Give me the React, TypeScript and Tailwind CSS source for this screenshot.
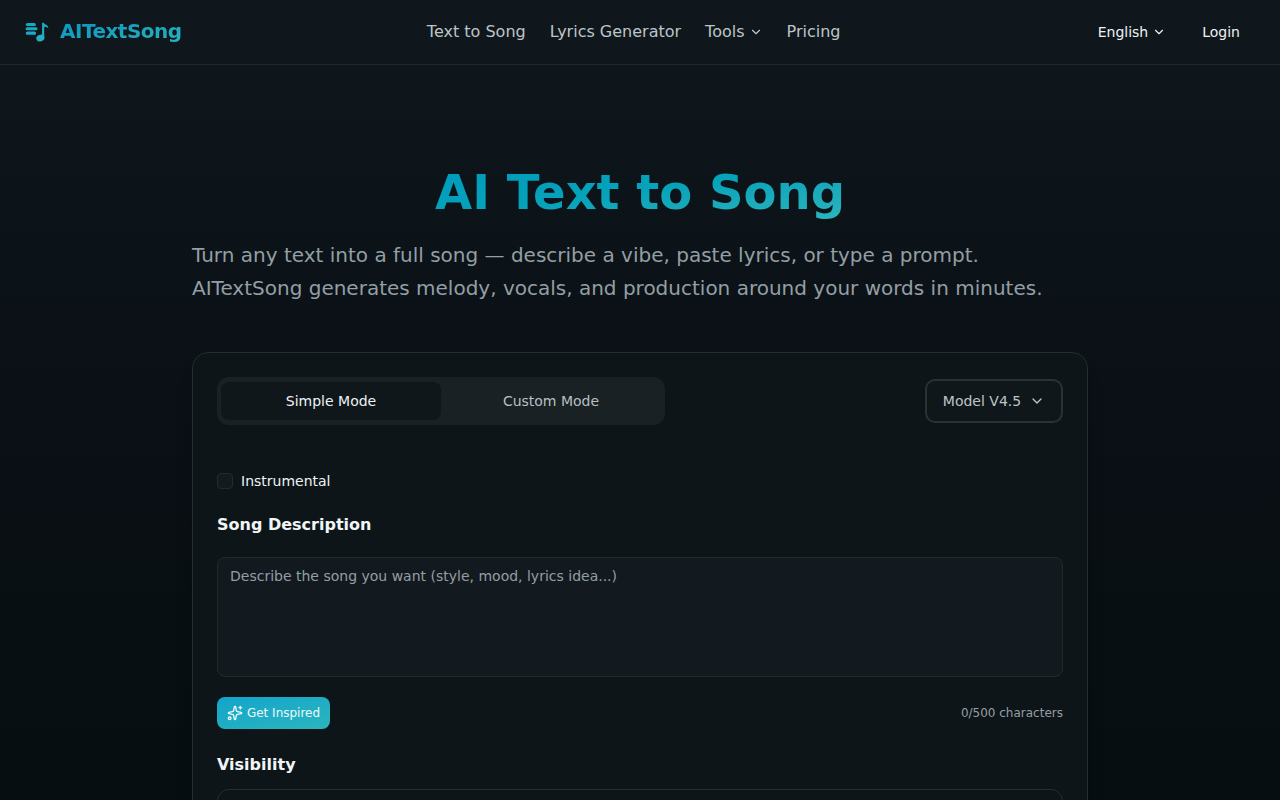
import { ChevronDown, Sparkles } from "lucide-react";

function LogoMark() {
  return (
    <svg viewBox="0 0 24 24" className="size-6 overflow-visible" fill="none" aria-hidden="true">
      <defs>
        <linearGradient id="mark" x1="0" y1="0" x2="24" y2="24" gradientUnits="userSpaceOnUse">
          <stop stopColor="#0ea5c9" />
          <stop offset="1" stopColor="#2bb5bd" />
        </linearGradient>
      </defs>
      <g fill="url(#mark)">
        <rect x="1.8" y="2.9" width="10" height="3.1" rx="1.5" />
        <rect x="1.6" y="7.2" width="11.9" height="3.1" rx="1.5" />
        <rect x="1.8" y="11.6" width="10.2" height="3.1" rx="1.5" />
      </g>
      <ellipse cx="16.3" cy="18.1" rx="4.1" ry="3.3" transform="rotate(-18 16.3 18.1)" fill="url(#mark)" />
      <path
        d="M18.1 2.8h1.7c.6 2 4.5 1.8 4.5 5.4-1.3-1.2-2.6-1.5-4.1-1.5V18.2h-2.1z"
        fill="url(#mark)"
      />
    </svg>
  );
}

function Header() {
  return (
    <header className="h-[65px] shrink-0 border-b border-[#1f282a] bg-[#10171c]">
      <div className="flex h-16 items-center justify-between px-6">
        <a className="flex items-center gap-3">
          <LogoMark />
          <span className="bg-linear-to-br from-[#0693c0] to-[#2bb5bd] bg-clip-text pb-0.5 text-xl leading-7 font-bold tracking-tight text-transparent">
            AITextSong
          </span>
        </a>
        <nav className="flex items-center gap-6 text-base text-[#bdc5c9]">
          <a>Text to Song</a>
          <a>Lyrics Generator</a>
          <a className="flex items-center gap-1">
            Tools <ChevronDown className="size-3.5" />
          </a>
          <a>Pricing</a>
        </nav>
        <div className="flex items-center justify-end text-sm text-[#edf2f4]">
          <button className="flex items-center gap-1 px-3">
            English <ChevronDown className="size-3.5" />
          </button>
          <button className="ml-2 px-4">Login</button>
        </div>
      </div>
    </header>
  );
}

function ModeTabs() {
  return (
    <div className="grid h-12 w-[448px] grid-cols-2 rounded-xl bg-[#1a2124] px-1 py-[5px] text-sm">
      <button className="rounded-lg bg-[#10171a] text-[#edf2f4]">Simple Mode</button>
      <button className="text-[#b6bfc3]">Custom Mode</button>
    </div>
  );
}

export default function App() {
  return (
    <div className="flex h-screen flex-col overflow-hidden bg-linear-to-b from-[#10181d] via-[#0a1015] via-50% to-[#070e11] font-['DejaVu_Sans',sans-serif]">
      <Header />
      <main className="mx-auto w-[896px] pt-[97px]">
        <h1 className="mx-auto w-fit bg-linear-to-br from-[#0099bd] via-[#06a3ba] to-[#2bb5bd] bg-clip-text text-5xl leading-[60px] font-bold text-transparent">
          AI Text to Song
        </h1>
        <p className="mt-[17px] text-xl leading-[32.5px] text-[#939fa4]">
          Turn any text into a full song — describe a vibe, paste lyrics, or type a prompt. AITextSong generates
          melody, vocals, and production around your words in minutes.
        </p>
        <section className="mt-12 h-[700px] rounded-2xl border border-[#242e2f] bg-[#0d1519] p-6 shadow-xl">
          <div className="flex items-center justify-between">
            <ModeTabs />
            <button className="flex h-11 w-[138px] items-center justify-center gap-2 rounded-[10px] border-2 border-[#2a3235] bg-[#10171a] text-sm text-[#bdc5c9]">
              Model V4.5 <ChevronDown className="size-4" />
            </button>
          </div>
          <label className="mt-[46px] flex h-5 items-center gap-2 text-sm text-[#edf2f4]">
            <span className="size-4 rounded-sm border border-[#232b2e] bg-[#141b1f]" />
            Instrumental
          </label>
          <h2 className="mt-[22px] text-base leading-6 font-bold text-[#f1f5f6]">Song Description</h2>
          <textarea
            className="mt-5 block h-[120px] w-full resize-none rounded-lg border border-[#212a2d] bg-[#131a1f] px-3 py-2 text-sm placeholder:text-[#939fa4]"
            placeholder="Describe the song you want (style, mood, lyrics idea...)"
          />
          <div className="mt-5 flex items-center justify-between text-xs">
            <button className="flex h-8 w-[113px] items-center justify-center gap-1 rounded-lg bg-linear-to-br from-[#11a5cc] to-[#2bb5bd] text-[#edfafc]">
              <Sparkles className="size-4" />
              Get Inspired
            </button>
            <span className="text-[#939fa4]">0/500 characters</span>
          </div>
          <h2 className="mt-6 text-base leading-6 font-bold text-[#f1f5f6]">Visibility</h2>
          <div className="mt-3 h-16 rounded-xl border border-[#242e2f] bg-[#0d1519]" />
        </section>
      </main>
    </div>
  );
}
